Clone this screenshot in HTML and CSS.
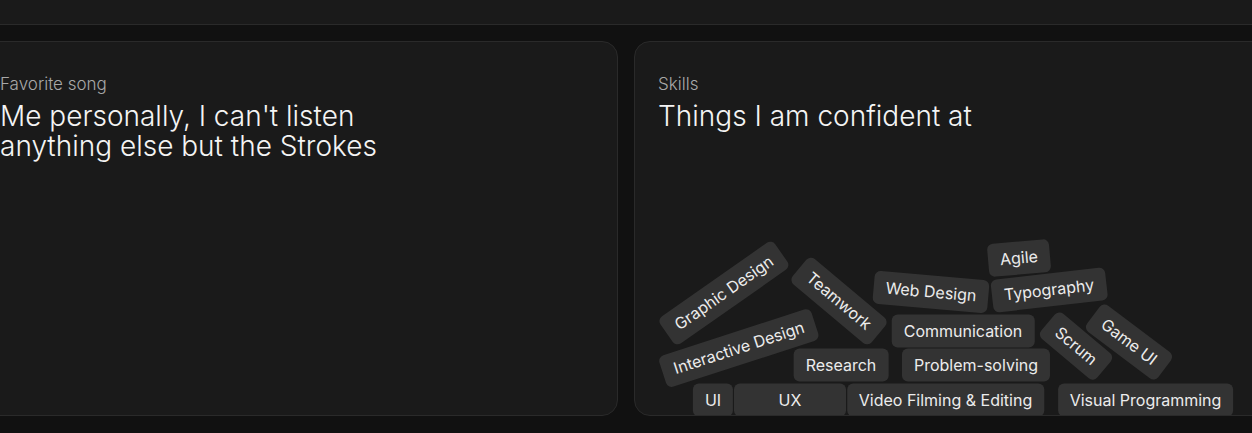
FILE: index.html
```html
<!DOCTYPE html>
<html lang="en">
<head>
<meta charset="utf-8">
<title>About</title>
<link rel="stylesheet" href="styles.css">
</head>
<body>
<header class="topbar"></header>
<main class="track">
  <section class="card">
    <p class="card-label">Favorite song</p>
    <h2 class="card-title">Me personally, I can't listen<br>anything else but the Strokes</h2>
  </section>
  <section class="card">
    <p class="card-label">Skills</p>
    <h2 class="card-title">Things I am confident at</h2>
    <div class="chips">
      <span class="chip" style="--x:89px;--y:251px;--r:-35deg">Graphic Design</span>
      <span class="chip" style="--x:204px;--y:259px;--r:40deg">Teamwork</span>
      <span class="chip" style="--x:104px;--y:306px;--r:-18deg">Interactive Design</span>
      <span class="chip" style="--x:206px;--y:323px;--r:0deg">Research</span>
      <span class="chip" style="--x:341px;--y:323px;--r:0deg">Problem-solving</span>
      <span class="chip" style="--x:328px;--y:288.5px;--r:0deg">Communication</span>
      <span class="chip" style="--x:295.5px;--y:249.5px;--r:5deg">Web Design</span>
      <span class="chip" style="--x:414px;--y:248px;--r:-6.5deg">Typography</span>
      <span class="chip" style="--x:383.5px;--y:215.5px;--r:-5deg">Agile</span>
      <span class="chip" style="--x:441px;--y:304px;--r:40deg">Scrum</span>
      <span class="chip" style="--x:494px;--y:299.5px;--r:37deg">Game UI</span>
      <span class="chip" style="--x:78px;--y:357.5px;--r:0deg">UI</span>
      <span class="chip chip-wide" style="--x:155px;--y:357.5px;--r:0deg">UX</span>
      <span class="chip" style="--x:310.5px;--y:357.5px;--r:0deg">Video Filming &amp; Editing</span>
      <span class="chip" style="--x:510.5px;--y:357.5px;--r:0deg">Visual Programming</span>
    </div>
  </section>
</main>
</body>
</html>
```
FILE: styles.css
```css
* { box-sizing: border-box; }

html, body {
  margin: 0;
  padding: 0;
  background: #111111;
  overflow: hidden;
  font-family: Inter, "Noto Sans", "Liberation Sans", sans-serif;
  color: #f2f2f2;
}

.topbar {
  height: 25px;
  background: #1a1a1a;
  border-bottom: 1px solid #2a2a2a;
}

.track {
  display: flex;
  gap: 16px;
  margin: 16px 0 0 -24px;
  width: max-content;
}

.card {
  position: relative;
  width: 642px;
  height: 375px;
  padding: 32px 23px 24px;
  background: #1a1a1a;
  border: 1px solid #2a2a2a;
  border-radius: 16px;
  overflow: hidden;
}

.card-label {
  margin: 0;
  font-size: 17px;
  font-weight: 300;
  line-height: 21px;
  color: #a8a8a8;
}

.card-title {
  margin: 6px 0 0;
  font-size: 28px;
  font-weight: 300;
  line-height: 30px;
  color: #f4f4f4;
}

.chips {
  position: absolute;
  inset: 0;
}

.chip {
  position: absolute;
  left: var(--x);
  top: var(--y);
  transform: translate(-50%, -50%) rotate(var(--r));
  padding: 6px 12px;
  font-size: 16px;
  line-height: 21px;
  font-weight: 400;
  white-space: nowrap;
  color: #ececec;
  background: #333333;
  border-radius: 6px;
}

.chip-wide {
  width: 112px;
  text-align: center;
}
```
